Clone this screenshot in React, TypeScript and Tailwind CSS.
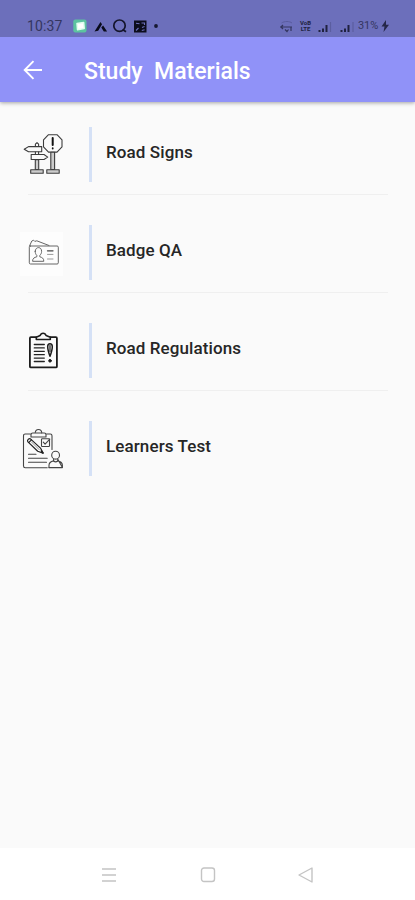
import React from "react";

type Item = {
  title: string;
  icon: React.ReactNode;
};

const iconProps = {
  width: 48,
  height: 48,
  viewBox: "0 0 48 48",
  fill: "none",
  strokeLinecap: "round" as const,
  strokeLinejoin: "round" as const,
};

function RoadSignsIcon() {
  return (
    <svg {...iconProps} stroke="#3c3c3c" strokeWidth="1.1">
      <path d="M29.5 4.7h8.500l5 5.2v7l-5 5.2h-8.500l-5-5.2v-7z" />
      <path d="M33.7 8v7" stroke="#111" strokeWidth="2" />
      <path d="M33.7 18.2v.3" stroke="#111" strokeWidth="1.8" />
      <path d="M31.8 22.2h3.8v17.3h-3.8z" fill="#ccc" />
      <path d="M27.8 39.8h12.4v3.4H27.8z" fill="#ccc" />
      <path d="M5.2 19.3l4.3-2.7h13.2v5.2H9.5z" />
      <path d="M12.2 24.5H25l3.7 2.6-3.7 2.4H12.2z" />
      <path d="M16.4 16.5v-2.3l1.6-1.5 1.6 1.5v2.3M16.4 22v2.3M19.6 22v2.3" />
      <path d="M16.3 29.6h3.4v10h-3.4z" fill="#ccc" />
      <path d="M11.7 39.8h12.5v3.4H11.7z" fill="#ccc" />
    </svg>
  );
}

function BadgeIcon() {
  return (
    <svg {...iconProps} stroke="#666" strokeWidth="1">
      <path d="M1 4h43v44H1z" fill="#fdfdfd" stroke="none" />
      <rect x="10.3" y="18" width="29" height="18" rx="1.2" />
      <path d="M10.5 18l2.3-5 1.8-.8 1.2 1.2 2-.6L30 17.5" />
      <path d="M16.2 23.3c0-5 6.4-5 6.4 0 0 1.8-.7 3.2-1.8 4v1.5c2.4.7 4 1.4 4 4.5H13.6c0-3.1 1.7-3.8 4.2-4.5v-1.5c-1-.8-1.6-2.2-1.6-4z" />
      <path d="M28.5 22.8h5.5" stroke="#444" strokeWidth="1.3" />
      <path d="M28.5 26.4h5.5M28.5 31h5.5" stroke="#999" />
    </svg>
  );
}

function RegulationsIcon() {
  return (
    <svg {...iconProps} stroke="#1c1c1c" strokeWidth="1.8">
      <rect x="10.9" y="11.2" width="27" height="30.2" rx="1" />
      <path
        d="M17.3 13.5v-2.3l3.8-1.6c1-3.2 5-3.2 6 0l4.2 1.6v2.3z"
        fill="#fafafa"
        strokeWidth="1.6"
      />
      <path
        d="M15.3 18.5h10M15.3 21.9h10M15.3 25.3h10M15.3 28.7h10M15.3 32.1h10M15.3 35.5h10"
        stroke="#222"
        strokeWidth="1.3"
      />
      <path d="M31 30.3c-1.2-3.2-2.3-6.6-2.3-9.5 0-4 4.6-4 4.6 0 0 2.9-1.1 6.3-2.3 9.5z" strokeWidth="1.5" />
      <path d="M31 19.5v6" strokeWidth="1.2" />
      <circle cx="31" cy="34.8" r="1.3" fill="#1c1c1c" strokeWidth="1" />
    </svg>
  );
}

function LearnersIcon() {
  return (
    <svg {...iconProps} stroke="#444" strokeWidth="1.1">
      <path d="M11.5 10H6.2c-1 0-1.7.7-1.7 1.7V42c0 1 .7 1.7 1.7 1.7h22M27.5 10h3.8c1 0 1.7.7 1.7 1.7v13.8" />
      <path d="M12 13v-2.2c0-1 .6-1.8 1.8-1.8h2.4c.3-4.7 6.3-4.7 6.6 0h2.4c1.2 0 1.8.8 1.8 1.8V13z" />
      <path d="M17 9h5.5" />
      <rect x="22.5" y="14.7" width="8" height="7.8" rx=".8" />
      <path d="M24.3 18.2l1.8 2 4.7-5" />
      <path
        d="M8.7 17.6c-.8-1.8 1.5-3.6 3-2.5l9.8 9 2.5 5-5.3-1.8z"
        fill="#fafafa"
        stroke="#222"
        strokeWidth="1.2"
      />
      <path d="M9.7 18.5l2.8-2.6" stroke="#222" />
      <path d="M12.5 18l7.5 7.500" stroke="#777" strokeWidth=".8" />
      <path d="M22.5 27l1.500 2" stroke="#222" strokeWidth="1.6" />
      <path d="M9.5 30.3H17M9.5 34.3h18.7M9.5 38.3h18" />
      <circle cx="36.6" cy="31.2" r="3.9" />
      <path d="M30 43.6v-2.3c0-2.7 1.8-3.8 4.6-4.4v-1.8M38.7 35.1v1.8c2.8.6 4.7 1.7 4.7 4.4v2.3z" />
      <path d="M30 43.6h13M34.6 37c1.2 1 2.9 1 4.1 0" />
    </svg>
  );
}

const items: Item[] = [
  { title: "Road Signs", icon: <RoadSignsIcon /> },
  { title: "Badge QA", icon: <BadgeIcon /> },
  { title: "Road Regulations", icon: <RegulationsIcon /> },
  { title: "Learners Test", icon: <LearnersIcon /> },
];

function StatusBar() {
  return (
    <div className="relative z-10 flex h-[37px] shrink-0 items-end justify-between bg-[#6c6fbb] pr-[26px] pb-[3px] pl-[27px] text-[#343660]">
      <div className="flex h-[16px] items-center">
        <span className="w-[46px] text-[14px] leading-4 tracking-[0.1px]">10:37</span>
        <svg width="88" height="16" viewBox="0 0 88 16" fill="none">
          <rect x=".3" y="1.5" width="13.2" height="13" rx="2" fill="#5cc3a0" />
          <path d="M4 5.5l6.7-1 .5 6-6.7 1.2z" fill="#fff" stroke="#e2fff0" strokeWidth="1.5" strokeLinejoin="round" />
          <path d="M21.500 13.500l6-9.500 1.500 2.200-3.800 6.500zM28.300 9.500l1.800-2 4 6h-3.300z" fill="#090b1b" />
          <circle cx="46.5" cy="7.7" r="5.7" stroke="#14152c" strokeWidth="1.7" />
          <path d="M49.5 11.5l3.5 2.3" stroke="#14152c" strokeWidth="1.8" />
          <path d="M61 2.500h12.500v12H61z" fill="#0c0d1d" />
          <path d="M63 5.200l3.500.5M68.500 5h3v2M69 9.500l2.500-1M68.800 12.500l2.800-.8M63 12.500l2.500-2.500" stroke="#6c6fbb" strokeWidth="1.1" />
          <circle cx="83" cy="8" r="1.9" fill="#161831" />
        </svg>
      </div>
      <div className="flex h-[16px] items-center">
        <svg width="78" height="16" viewBox="0 0 78 16" fill="none">
          <path d="M1.500 5c3-2 8-2 10.500 0" stroke="#5a5c9f" />
          <path d="M0 9h12M1 9l2-2M1 9l2 2M5 11.500l2 2 1.500-2M11 9v4" stroke="#343660" strokeWidth="1.2" />
        </svg>
        <div className="-ml-[60px] flex w-[15px] flex-col text-center text-[6px] leading-[6px] font-bold text-[#202240]">
          <span className="h-[6px]">VoB</span>
          <span className="h-[6px]">LTE</span>
        </div>
        <svg width="45" height="16" viewBox="33 0 45 16" fill="none">
          <path d="M39.500 14v-2M43 14v-3.500M46.500 14V7M61.500 14v-2M65 14v-3.500M68.500 14V7" stroke="#202240" strokeWidth="2" />
          <path d="M50.500 14V4M73 14V4" stroke="#5b5ea0" strokeWidth="1.2" />
        </svg>
        <span className="w-[23px] text-[11px] leading-4 tracking-[-0.1px]">31%</span>
        <svg width="8" height="12" viewBox="0 0 8 12" fill="#25274a">
          <path d="M5 0L.5 6.500h3L2.500 12 8 4.800H5z" />
        </svg>
      </div>
    </div>
  );
}

export default function App() {
  return (
    <div className="flex h-[900px] w-[415px] flex-col overflow-hidden bg-[#fafafa] font-[Roboto,sans-serif]">
      <StatusBar />

      <header className="flex h-[65px] shrink-0 items-center bg-[#9092f8] pl-[23px] text-white shadow-[0_1px_4px_rgba(0,0,0,0.35)]">
        <button className="cursor-pointer" aria-label="Back">
          <svg width="20" height="20" viewBox="0 0 20 20" fill="none" stroke="currentColor" strokeWidth="1.9">
            <path d="M19 10H2M10.500 1.200L1.700 10l8.800 8.800" />
          </svg>
        </button>
        <h1 className="ml-[41px] pt-[5px] text-[23px] font-medium whitespace-pre">Study  Materials</h1>
      </header>

      <main className="flex-1 pt-[11px]">
        {items.map((item, index) => (
          <div key={item.title} className="h-[98px]">
            <div className="flex h-[81px] items-center pt-[1px] pl-[19px]">
              {item.icon}
              <div className="ml-[22px] h-[55px] w-[3px] bg-[#d5e1f6]" />
              <span className="ml-[14px] pb-[2px] text-[17px] font-medium tracking-[0.1px] text-[#262626]">
                {item.title}
              </span>
            </div>
            {index < items.length - 1 && <div className="mr-[27px] ml-[28px] h-px bg-[#efefef]" />}
          </div>
        ))}
      </main>

      <nav className="flex h-[52px] items-center justify-between bg-white px-[101px] pt-[2px]">
        <svg width="16" height="16" viewBox="0 0 16 16" stroke="#c4c4c4" strokeWidth="1.4">
          <path d="M1 2h14M1 8h14M1 14h14" />
        </svg>
        <svg width="16" height="16" viewBox="0 0 16 16" fill="none" stroke="#c4c4c4" strokeWidth="1.4">
          <rect x="1.500" y="1" width="13" height="13.500" rx="2.500" />
        </svg>
        <svg width="16" height="16" viewBox="0 0 16 16" fill="none" stroke="#c4c4c4" strokeWidth="1.4" strokeLinejoin="round">
          <path d="M1 8L14 1v14z" />
        </svg>
      </nav>
    </div>
  );
}
